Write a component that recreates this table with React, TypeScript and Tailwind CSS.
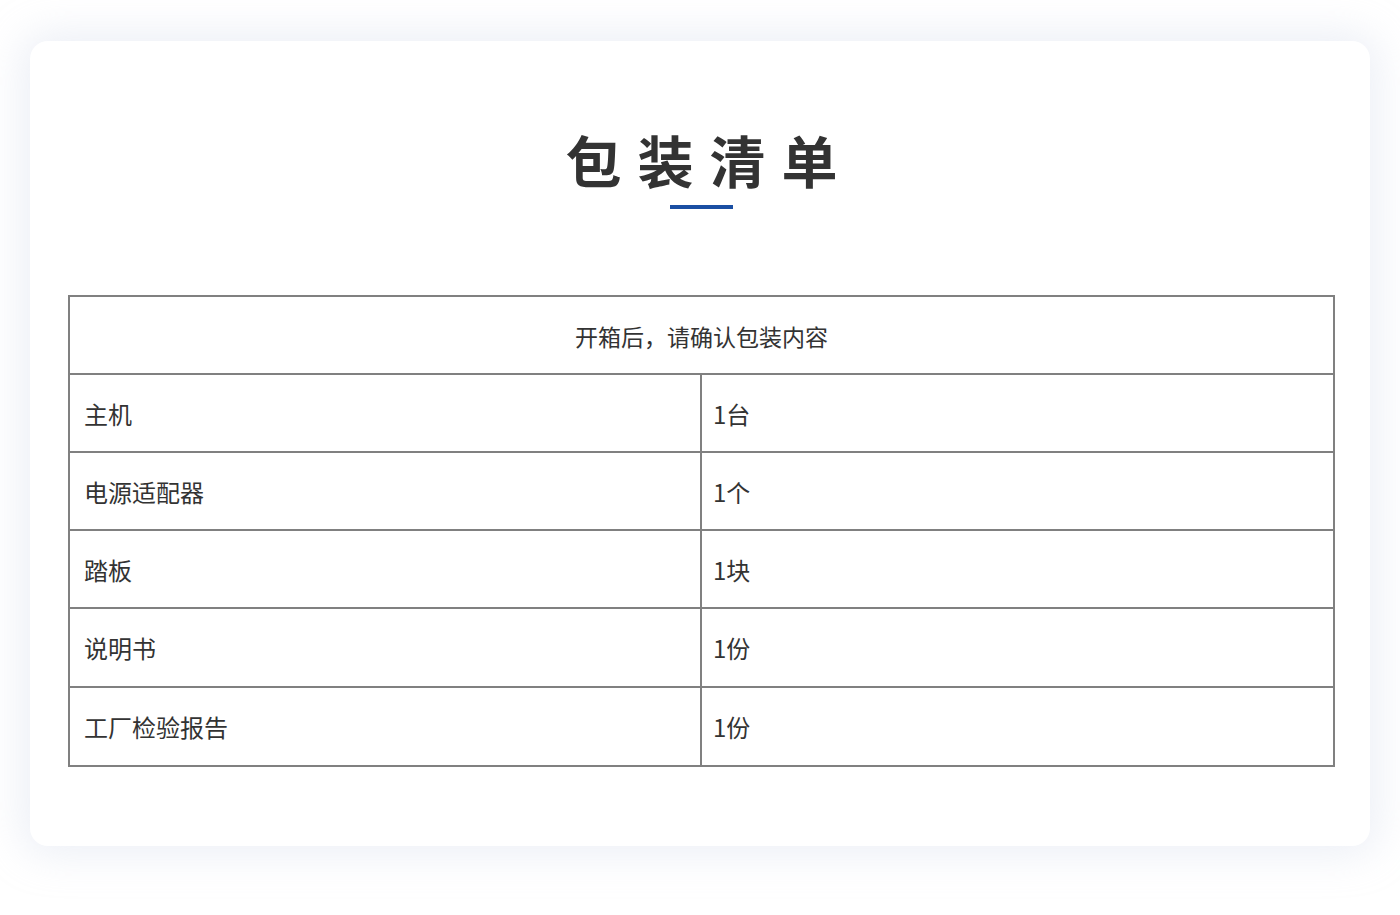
const rows = [
  ["主机", "1台", "h-[78px]"],
  ["电源适配器", "1个", "h-[78px]"],
  ["踏板", "1块", "h-[78px]"],
  ["说明书", "1份", "h-[79px]"],
  ["工厂检验报告", "1份", "h-[79px]"],
]

export default function App() {
  return (
    <div
      className="w-[1400px] h-[915px] bg-white pt-[41px] px-[30px]"
      style={{ fontFamily: '"Noto Sans CJK SC", "Noto Sans", sans-serif' }}
    >
      <div className="h-[805px] rounded-[18px] bg-white shadow-[0_0_40px_8px_rgba(200,210,230,0.35)] pl-[38px] pr-[35px] pt-[86px]">
        <div className="flex flex-col items-center">
          <h1 className="text-[56px] leading-[64px] font-bold text-[#333] tracking-[16px] pl-[16px]">包装清单</h1>
          <div className="mt-[14px] w-[63px] h-[4px] bg-[#1a4fa3]" />
        </div>

        <table className="mt-[86px] w-full border-collapse text-[#333]">
          <tbody>
            <tr>
              <td colSpan={2} className="h-[78px] border-2 border-[#808080] pt-[2px] text-center text-[23px]">
                开箱后，请确认包装内容
              </td>
            </tr>
            {rows.map(([name, qty, h]) => (
              <tr key={name}>
                <td className={`${h} w-[632px] border-2 border-[#808080] pl-[14px] pt-[1px] text-[24px]`}>{name}</td>
                <td className={`${h} border-2 border-[#808080] pl-[11px] pt-[1px] text-[24px]`}>{qty}</td>
              </tr>
            ))}
          </tbody>
        </table>
      </div>
    </div>
  )
}
